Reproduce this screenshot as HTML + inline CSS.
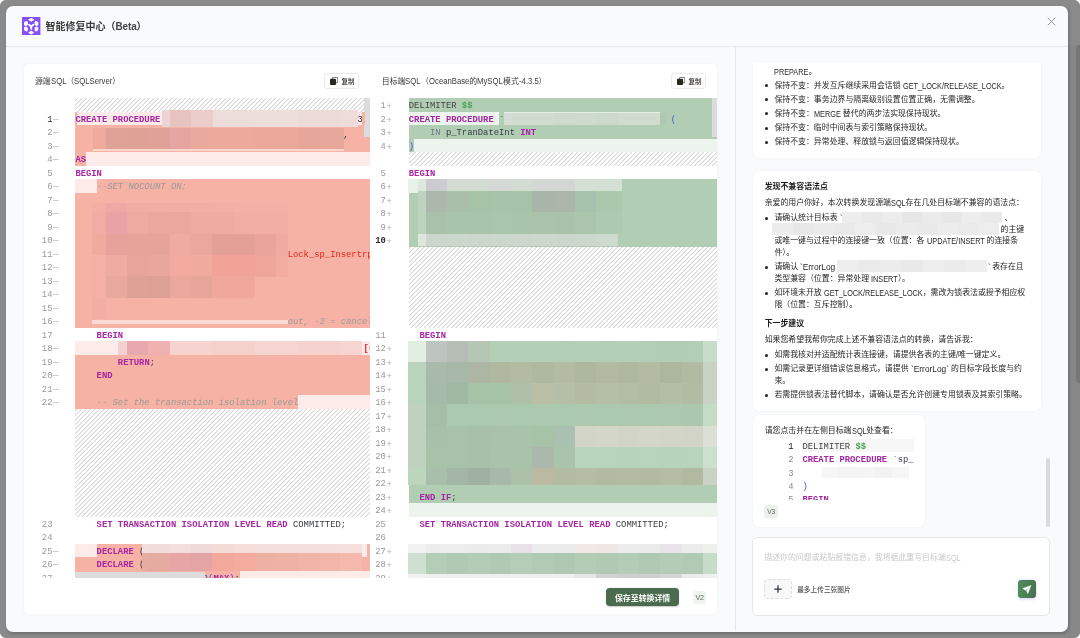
<!DOCTYPE html>
<html lang="zh-CN">
<head>
<meta charset="utf-8">
<title>智能修复中心（Beta）</title>
<style>
*{box-sizing:border-box;margin:0;padding:0}
html,body{width:1080px;height:638px;overflow:hidden}
body{background:#8a8a8a;font-family:"Liberation Sans","Noto Sans CJK SC",sans-serif;color:#222;position:relative}
.pgtrack{position:absolute;left:1068px;top:45px;width:12px;height:593px;background:#878787}
.pgthumb{position:absolute;left:1075.5px;top:45px;width:8px;height:338px;background:#767676;border-radius:4px}
.corner{position:absolute;width:6px;height:6px;z-index:9}
.modal{position:absolute;left:5.5px;top:5.5px;width:1062.3px;height:626.2px;background:#f9fafc;border-radius:7px;overflow:hidden;box-shadow:1px 1.5px 3.5px rgba(0,0,0,.2)}
.lay{position:absolute;left:-.5px;top:-.5px;width:1064px;height:627px;will-change:transform}
.in{position:absolute;left:.5px;top:.5px;width:1062.3px;height:625.5px}
.hdr{position:absolute;left:0;top:0;right:0;height:41.6px;border-bottom:1px solid #e5e8ee}
.logo{position:absolute;left:16.7px;top:11.4px;width:18.4px;height:18.4px}
.title{position:absolute;left:40px;top:12.6px;font-size:10px;line-height:18px;font-weight:700;color:#3c3c3c;white-space:nowrap}
.title b{font-weight:700;color:#444;letter-spacing:-.15px}
.close{position:absolute;left:1041.8px;top:11.9px;width:9px;height:9px}
.card{position:absolute;left:18.7px;top:58.5px;width:693.3px;height:550px;background:#fff;border-radius:5px;box-shadow:0 0 3px rgba(20,30,60,.05);overflow:hidden}
.vdiv{position:absolute;left:729.6px;top:41px;width:1px;bottom:0;background:#e5e8ee}
.lbl{position:absolute;top:10.5px;font-size:7.9px;line-height:14px;color:#3a3a3a;white-space:nowrap}
.el{font-size:8.5px;line-height:14px;vertical-align:top;transform:scaleX(.91);position:relative;top:-.3px}
.edline{position:absolute;left:0;right:0;top:33.8px;height:1px;background:#f1f1f3}
.copy{position:absolute;top:9px;width:35.3px;height:15.6px;border:1px solid #ebeae8;border-radius:3px;background:#fff;font-size:6.5px;line-height:13.6px;color:#2a2622;font-weight:500;white-space:nowrap}
.copy svg{position:absolute;left:4.6px;top:3px;width:8.2px;height:8px}
.copy span{position:absolute;left:16.2px;top:1px}
.ed{position:absolute;top:34.3px;height:479.7px;overflow:hidden;background:#fff;font-family:"Liberation Mono",monospace;font-size:8.86px;line-height:13.5px;color:#383a42}
.row{position:relative;height:13.5px;white-space:pre}
.ln{position:absolute;top:0;height:13.5px;line-height:17px;overflow:hidden;color:#9a9a9a;text-align:right;white-space:pre}
.ln b{color:#2b2b2b;font-weight:400}
.sgp,.sgm{width:9px;text-align:left;color:#b0b0b0}
.sgp{line-height:18.6px}
.sgm{transform:scaleX(1.32);transform-origin:0 50%}
.code{position:absolute;top:0;right:0;height:13.5px;line-height:17px;white-space:pre;overflow:hidden}
.hatch{background-image:repeating-linear-gradient(-45deg,rgba(40,40,40,.2) 0,rgba(40,40,40,.18) .35px,transparent 1.05px,transparent 2.48px,rgba(40,40,40,.18) 3.182px)}
.rl{background:#fcebe9}.rd{background:#f6b2a5}
.gl{background:#edf4ed}.gd{background:#b1cdb3}
.code>.rd,.code>.rl,.code>.gd,.code>.gl{display:inline-block;height:13.5px;vertical-align:top}
.k{color:#a626a4;font-weight:700}
.c{color:#9c9a98;font-style:italic}
.r{color:#e4221b}
.g{color:#4ba155;font-weight:700}
.b{color:#3b5bdb}
.t{color:#6f7f90}
.m{position:absolute}
span.m{line-height:17px;white-space:pre}
.sb{position:absolute;background:#dcdcdc}
.save{position:absolute;left:582px;top:523.9px;width:72.8px;height:18.3px;border-radius:4px;background:#4b6b4e;color:#fff;font-size:7.9px;font-weight:700;line-height:21.3px;text-align:center;white-space:nowrap;overflow:hidden;box-shadow:0 .8px 1.5px rgba(0,0,0,.22)}
.v2{position:absolute;left:668.5px;top:526.5px;width:13.6px;height:13.4px;border-radius:2.5px;background:#eef4ee;color:#666;font-size:7.2px;letter-spacing:-.35px;line-height:13.2px;text-align:center}
.chat{position:absolute;left:730.5px;top:48px;right:0;bottom:0;overflow:hidden;font-size:7.85px;line-height:14.07px;color:#262626}
.msg{position:absolute;background:#fff;border-radius:7px;box-shadow:0 0 3px rgba(20,30,60,.05)}
.p{position:absolute;white-space:nowrap;font-size:7.9px;line-height:12px;color:#262626}
.h{font-weight:700;color:#1c1c1c}
.dot{position:absolute;width:3.1px;height:3.1px;border-radius:50%;background:#222}
.e,.el,.e2{display:inline-block;transform-origin:0 50%;white-space:pre}
.e{transform:scaleX(.86)}
.e2{transform:scaleX(.98);font-size:8.5px;line-height:12px;vertical-align:top}
.e{font-size:8.5px;line-height:12px;vertical-align:top}
.chatclip{position:absolute;left:0;top:57.6px;width:1062px;height:476px;overflow:hidden;margin-top:0}
.chatclip>*{margin-top:-57.6px}
.mini{position:absolute;overflow:hidden;font-family:"Liberation Mono",monospace;font-size:8.83px;line-height:13.15px;color:#383a42}
.mrow{white-space:pre;height:13.15px;line-height:16.8px;margin-left:22.4px;position:relative;overflow:visible}
.mn{position:absolute;left:-23.8px;width:15px;text-align:right;color:#8a8a8a}
.v3{position:absolute;width:13.6px;height:12.8px;border-radius:2.5px;background:#eaf1ea;color:#666;font-size:6.7px;letter-spacing:-.3px;line-height:13px;text-align:center}
.inp{position:absolute;background:#fff;border:1px solid #e4e6e9;border-radius:5.5px}
.plus{position:absolute;background:#f8f8f8;border:1px dashed #dedede;border-radius:4px}
.send{position:absolute;width:17.9px;height:18.1px;border-radius:3.2px;background:linear-gradient(100deg,#4f8f5a,#47704e);box-shadow:0 .6px 3px rgba(110,90,255,.32)}
.send svg{position:absolute;left:0;top:0;width:18px;height:18px}
</style>
</head>
<body>
<div class="pgtrack"></div><div class="pgthumb"></div>
<div class="corner" style="left:0;top:0;background:radial-gradient(circle at 100% 100%,transparent 5.6px,#fff 6.4px)"></div><div class="corner" style="right:0;top:0;background:radial-gradient(circle at 0 100%,transparent 5.6px,#fff 6.4px)"></div><div class="corner" style="left:0;bottom:0;background:radial-gradient(circle at 100% 0,transparent 5.6px,#fff 6.4px)"></div><div class="corner" style="right:0;bottom:0;background:radial-gradient(circle at 0 0,transparent 5.6px,#fff 6.4px)"></div>
<div class="modal"><div class="lay"><div class="in">
<div class="hdr"><svg class="logo" viewBox="0 0 18 18"><rect width="18" height="18" fill="#854ff7"/><g fill="#fff" stroke="#fff" stroke-width="1" stroke-linejoin="round">
<path d="M9 1.4L11.2 2.7L9 4.1L6.8 2.7Z"/><path d="M9 13.9L11.2 15.3L9 16.6L6.8 15.3Z"/>
<path d="M2.5 5.4L4.4 4.3L5.2 5L5.2 7.3L3.7 8.3L2.5 7.6Z"/><path d="M15.5 5.4L13.6 4.3L12.8 5L12.8 7.3L14.3 8.3L15.5 7.6Z"/>
<path d="M2.5 12.6L4.4 13.7L5.2 13L5.2 10.7L3.7 9.7L2.5 10.4Z"/><path d="M15.5 12.6L13.6 13.7L12.8 13L12.8 10.7L14.3 9.7L15.5 10.4Z"/>
</g><path d="M6.9 7.6L9 9.2L11.1 7.6M9 9.2V11.6" stroke="#fff" stroke-width="1.9" stroke-linecap="round" stroke-linejoin="round" fill="none"/></svg><div class="title">智能修复中心（<b>Beta</b>）</div>
<svg class="close" viewBox="0 0 9 9"><path d="M0.8 0.8L8.2 8.2M8.2 0.8L0.8 8.2" stroke="#8a8a8a" stroke-width="0.9" fill="none"/></svg></div>
<div class="card">
<div class="edline"></div>
<div class="lbl" style="left:10.7px">源端<span class="el" style="margin-right:-1.53px">SQL</span>（<span class="el" style="margin-right:-3.78px">SQLServer</span>）</div>
<div class="copy" style="left:300px"><svg viewBox="0 0 8.2 8"><rect x="2.5" y="0.35" width="5.3" height="5.3" rx="0.9" fill="none" stroke="#2a2622" stroke-width="0.7"/><rect x="0" y="1.75" width="6.05" height="6.25" rx="0.9" fill="#2a2622"/></svg><span>复制</span></div>
<div class="lbl" style="left:357.6px">目标端<span class="el" style="margin-right:-1.53px">SQL</span>（<span class="el" style="margin-right:-4.00px">OceanBase</span>的<span class="el" style="margin-right:-2.55px">MySQL</span>模式<span class="el" style="margin-right:-1.96px">-4.3.5</span>）</div>
<div class="copy" style="left:647px"><svg viewBox="0 0 8.2 8"><rect x="2.5" y="0.35" width="5.3" height="5.3" rx="0.9" fill="none" stroke="#2a2622" stroke-width="0.7"/><rect x="0" y="1.75" width="6.05" height="6.25" rx="0.9" fill="#2a2622"/></svg><span>复制</span></div>
<div class="ed" style="left:0px;width:346px"><div class="row" style="height:13.5px"><span class="code hatch" style="left:51.2px;height:13.5px"></span></div><div class="row"><span class="ln" style="left:0;width:28.3px"><b>1</b></span><span class="ln sgm" style="left:28.3px">−</span><span class="code rl" style="left:51.2px"><span class="rd" style="width:1.9px;margin-right:-1.9px"></span><span class="k">CREATE PROCEDURE</span></span></div><div class="row"><span class="ln" style="left:0;width:28.3px">2</span><span class="ln sgm" style="left:28.3px">−</span><span class="code rd" style="left:51.2px"></span></div><div class="row"><span class="ln" style="left:0;width:28.3px">3</span><span class="ln sgm" style="left:28.3px">−</span><span class="code rd" style="left:51.2px"></span></div><div class="row"><span class="ln" style="left:0;width:28.3px">4</span><span class="ln sgm" style="left:28.3px">−</span><span class="code rl" style="left:51.2px"><span class="rd"><span class="k">AS</span></span></span></div><div class="row"><span class="ln" style="left:0;width:28.3px">5</span><span class="code " style="left:51.2px"><span class="k">BEGIN</span></span></div><div class="row"><span class="ln" style="left:0;width:28.3px">6</span><span class="ln sgm" style="left:28.3px">−</span><span class="code rd" style="left:51.2px"><span class="rl">    </span><span class="c">--SET NOCOUNT ON;</span></span></div><div class="row"><span class="ln" style="left:0;width:28.3px">7</span><span class="ln sgm" style="left:28.3px">−</span><span class="code rd" style="left:51.2px"></span></div><div class="row"><span class="ln" style="left:0;width:28.3px">8</span><span class="ln sgm" style="left:28.3px">−</span><span class="code rd" style="left:51.2px"></span></div><div class="row"><span class="ln" style="left:0;width:28.3px">9</span><span class="ln sgm" style="left:28.3px">−</span><span class="code rd" style="left:51.2px"></span></div><div class="row"><span class="ln" style="left:0;width:28.3px">10</span><span class="ln sgm" style="left:28.3px">−</span><span class="code rd" style="left:51.2px"></span></div><div class="row"><span class="ln" style="left:0;width:28.3px">11</span><span class="ln sgm" style="left:28.3px">−</span><span class="code rd" style="left:51.2px">                                        <span class="r">Lock_sp_Insertrpt</span></span></div><div class="row"><span class="ln" style="left:0;width:28.3px">12</span><span class="ln sgm" style="left:28.3px">−</span><span class="code rd" style="left:51.2px"></span></div><div class="row"><span class="ln" style="left:0;width:28.3px">13</span><span class="ln sgm" style="left:28.3px">−</span><span class="code rd" style="left:51.2px"></span></div><div class="row"><span class="ln" style="left:0;width:28.3px">14</span><span class="ln sgm" style="left:28.3px">−</span><span class="code rd" style="left:51.2px"></span></div><div class="row"><span class="ln" style="left:0;width:28.3px">15</span><span class="ln sgm" style="left:28.3px">−</span><span class="code rd" style="left:51.2px"></span></div><div class="row"><span class="ln" style="left:0;width:28.3px">16</span><span class="ln sgm" style="left:28.3px">−</span><span class="code rd" style="left:51.2px">                                        <span class="c">out, -2 = cancel</span></span></div><div class="row"><span class="ln" style="left:0;width:28.3px">17</span><span class="code " style="left:51.2px">    <span class="k">BEGIN</span></span></div><div class="row"><span class="ln" style="left:0;width:28.3px">18</span><span class="ln sgm" style="left:28.3px">−</span><span class="code rl" style="left:51.2px"></span></div><div class="row"><span class="ln" style="left:0;width:28.3px">19</span><span class="ln sgm" style="left:28.3px">−</span><span class="code rd" style="left:51.2px">        <span class="k">RETURN</span>;</span></div><div class="row"><span class="ln" style="left:0;width:28.3px">20</span><span class="ln sgm" style="left:28.3px">−</span><span class="code rd" style="left:51.2px">    <span class="k">END</span></span></div><div class="row"><span class="ln" style="left:0;width:28.3px">21</span><span class="ln sgm" style="left:28.3px">−</span><span class="code rd" style="left:51.2px"></span></div><div class="row"><span class="ln" style="left:0;width:28.3px">22</span><span class="ln sgm" style="left:28.3px">−</span><span class="code rl" style="left:51.2px"><span class="rd">    <span class="c">-- Set the transaction isolation level</span></span></span></div><div class="row" style="height:108px"><span class="code hatch" style="left:51.2px;height:108px"></span></div><div class="row"><span class="ln" style="left:0;width:28.3px">23</span><span class="code " style="left:51.2px">    <span class="k">SET TRANSACTION ISOLATION LEVEL READ</span> COMMITTED;</span></div><div class="row"><span class="ln" style="left:0;width:28.3px">24</span><span class="code " style="left:51.2px"></span></div><div class="row"><span class="ln" style="left:0;width:28.3px">25</span><span class="ln sgm" style="left:28.3px">−</span><span class="code rl" style="left:51.2px">    <span class="rd"><span class="k">DECLARE</span> (</span></span></div><div class="row"><span class="ln" style="left:0;width:28.3px">26</span><span class="ln sgm" style="left:28.3px">−</span><span class="code rd" style="left:51.2px">    <span class="k">DECLARE</span> (</span></div><div class="row"><span class="ln" style="left:0;width:28.3px">27</span><span class="ln sgm" style="left:28.3px">−</span><span class="code rl" style="left:51.2px"><span class="rd">                        <span class="b">?(</span><span class="k">MAX</span><span class="b">)</span>;</span></span></div><i class="sb" style="left:340.3px;top:0;width:5.5px;height:39px"></i><i class="sb" style="left:51px;top:474px;width:130px;height:6px"></i><i class="m" style="left:138.2px;top:11.3px;width:8.3px;height:17.8px;background:#ecd3d5"></i>
<i class="m" style="left:146.3px;top:11.3px;width:21.2px;height:17.8px;background:#e8c4c0"></i>
<i class="m" style="left:167.3px;top:11.3px;width:21.4px;height:17.8px;background:#ebcecb"></i>
<i class="m" style="left:188.5px;top:11.3px;width:42.7px;height:17.8px;background:#ecdcda"></i>
<i class="m" style="left:231px;top:11.3px;width:42.9px;height:17.8px;background:#eddddb"></i>
<i class="m" style="left:273.7px;top:11.3px;width:42.8px;height:17.8px;background:#ecdbd9"></i>
<i class="m" style="left:316.3px;top:11.3px;width:17.3px;height:17.8px;background:#eddcda"></i>
<span class="m " style="left:333.4px;top:13.5px">3</span>
<i class="m" style="left:69.3px;top:29.3px;width:12.6px;height:21.2px;background:#eeaa9d"></i>
<i class="m" style="left:81.7px;top:29.3px;width:21.5px;height:21.2px;background:#dfa296"></i>
<i class="m" style="left:103px;top:29.3px;width:21.5px;height:21.2px;background:#dea195"></i>
<i class="m" style="left:124.3px;top:29.3px;width:21.6px;height:21.2px;background:#e0a298"></i>
<i class="m" style="left:145.7px;top:29.3px;width:21.5px;height:21.2px;background:#e6a5a0"></i>
<i class="m" style="left:167px;top:29.3px;width:21.5px;height:21.2px;background:#eaa99d"></i>
<i class="m" style="left:188.3px;top:29.3px;width:42.9px;height:21.2px;background:#ecaa9d"></i>
<i class="m" style="left:231px;top:29.3px;width:42.9px;height:21.2px;background:#eaa89b"></i>
<i class="m" style="left:273.7px;top:29.3px;width:21.5px;height:21.2px;background:#e6a79a"></i>
<i class="m" style="left:295px;top:29.3px;width:25px;height:21.2px;background:#e7a89b"></i>
<i class="m" style="left:69.3px;top:50.3px;width:250.7px;height:2.8px;background:#fbd6cd"></i>
<span class="m " style="left:319px;top:29px">,</span>
<i class="m" style="left:338.1px;top:13.5px;width:2.5px;height:13.7px;background:#f6b2a5"></i>
<i class="m" style="left:67.5px;top:105px;width:14.4px;height:9.4px;background:#f4aea5"></i>
<i class="m" style="left:81.7px;top:105px;width:21.5px;height:9.4px;background:#efa8a6"></i>
<i class="m" style="left:103px;top:105px;width:21.5px;height:9.4px;background:#f2ada3"></i>
<i class="m" style="left:124.3px;top:105px;width:21.6px;height:9.4px;background:#f2ada2"></i>
<i class="m" style="left:145.7px;top:105px;width:21.5px;height:9.4px;background:#f2aea3"></i>
<i class="m" style="left:167px;top:105px;width:21.5px;height:9.4px;background:#f3aea3"></i>
<i class="m" style="left:188.3px;top:105px;width:21.6px;height:9.4px;background:#f3afa3"></i>
<i class="m" style="left:209.7px;top:105px;width:21.5px;height:9.4px;background:#f4b0a4"></i>
<i class="m" style="left:231px;top:105px;width:21.5px;height:9.4px;background:#f4b0a4"></i>
<i class="m" style="left:252.3px;top:105px;width:12px;height:9.4px;background:#f4b0a4"></i>
<i class="m" style="left:67.5px;top:114.2px;width:14.4px;height:21.6px;background:#f2aca3"></i>
<i class="m" style="left:81.7px;top:114.2px;width:21.5px;height:21.6px;background:#e9a3a4"></i>
<i class="m" style="left:103px;top:114.2px;width:21.5px;height:21.6px;background:#eeaaa1"></i>
<i class="m" style="left:124.3px;top:114.2px;width:21.6px;height:21.6px;background:#eaa79d"></i>
<i class="m" style="left:145.7px;top:114.2px;width:21.5px;height:21.6px;background:#eaa79c"></i>
<i class="m" style="left:167px;top:114.2px;width:21.5px;height:21.6px;background:#efaaa2"></i>
<i class="m" style="left:188.3px;top:114.2px;width:21.6px;height:21.6px;background:#efaba0"></i>
<i class="m" style="left:209.7px;top:114.2px;width:21.5px;height:21.6px;background:#f3aea3"></i>
<i class="m" style="left:231px;top:114.2px;width:21.5px;height:21.6px;background:#f3aea3"></i>
<i class="m" style="left:252.3px;top:114.2px;width:12px;height:21.6px;background:#f3aea3"></i>
<i class="m" style="left:67.5px;top:135.6px;width:14.4px;height:21.5px;background:#f0aaa0"></i>
<i class="m" style="left:81.7px;top:135.6px;width:21.5px;height:21.5px;background:#e6a29b"></i>
<i class="m" style="left:103px;top:135.6px;width:21.5px;height:21.5px;background:#e6a499"></i>
<i class="m" style="left:124.3px;top:135.6px;width:21.6px;height:21.5px;background:#e6a498"></i>
<i class="m" style="left:145.7px;top:135.6px;width:21.5px;height:21.5px;background:#efaba0"></i>
<i class="m" style="left:167px;top:135.6px;width:21.5px;height:21.5px;background:#eaa79c"></i>
<i class="m" style="left:188.3px;top:135.6px;width:21.6px;height:21.5px;background:#e4a097"></i>
<i class="m" style="left:209.7px;top:135.6px;width:21.5px;height:21.5px;background:#e4a096"></i>
<i class="m" style="left:231px;top:135.6px;width:21.5px;height:21.5px;background:#eaa49a"></i>
<i class="m" style="left:252.3px;top:135.6px;width:12px;height:21.5px;background:#f0aa9f"></i>
<i class="m" style="left:67.5px;top:156.9px;width:14.4px;height:21.5px;background:#f4b0a4"></i>
<i class="m" style="left:81.7px;top:156.9px;width:21.5px;height:21.5px;background:#eeab9f"></i>
<i class="m" style="left:103px;top:156.9px;width:21.5px;height:21.5px;background:#e7a59a"></i>
<i class="m" style="left:124.3px;top:156.9px;width:21.6px;height:21.5px;background:#e9a79b"></i>
<i class="m" style="left:145.7px;top:156.9px;width:21.5px;height:21.5px;background:#f3aba0"></i>
<i class="m" style="left:167px;top:156.9px;width:21.5px;height:21.5px;background:#f0aa9e"></i>
<i class="m" style="left:188.3px;top:156.9px;width:21.6px;height:21.5px;background:#f2a398"></i>
<i class="m" style="left:209.7px;top:156.9px;width:21.5px;height:21.5px;background:#f2a399"></i>
<i class="m" style="left:231px;top:156.9px;width:21.5px;height:21.5px;background:#eea69b"></i>
<i class="m" style="left:252.3px;top:156.9px;width:12px;height:21.5px;background:#f2aca0"></i>
<i class="m" style="left:67.5px;top:178.2px;width:14.4px;height:21.3px;background:#f4b0a4"></i>
<i class="m" style="left:81.7px;top:178.2px;width:21.5px;height:21.3px;background:#e8a89b"></i>
<i class="m" style="left:103px;top:178.2px;width:21.5px;height:21.3px;background:#dfa196"></i>
<i class="m" style="left:124.3px;top:178.2px;width:21.6px;height:21.3px;background:#dda095"></i>
<i class="m" style="left:145.7px;top:178.2px;width:21.5px;height:21.3px;background:#eaa79c"></i>
<i class="m" style="left:167px;top:178.2px;width:21.5px;height:21.3px;background:#e8a69a"></i>
<i class="m" style="left:188.3px;top:178.2px;width:21.6px;height:21.3px;background:#f0a89c"></i>
<i class="m" style="left:209.7px;top:178.2px;width:21.5px;height:21.3px;background:#f0a89c"></i>
<i class="m" style="left:67.5px;top:199.3px;width:14.4px;height:21.8px;background:#f3ada2"></i>
<i class="m" style="left:67.5px;top:221.7px;width:196.8px;height:3.6px;background:#f9dad5"></i>
<i class="m" style="left:93.5px;top:243px;width:9.7px;height:13.7px;background:#f2cfd0"></i>
<i class="m" style="left:103px;top:243px;width:21.5px;height:13.7px;background:#e8a9ae"></i>
<i class="m" style="left:124.3px;top:243px;width:21.6px;height:13.7px;background:#efb1b1"></i>
<i class="m" style="left:145.7px;top:243px;width:42.8px;height:13.7px;background:#f6d3ce"></i>
<i class="m" style="left:188.3px;top:243px;width:42.9px;height:13.7px;background:#f5d1cc"></i>
<i class="m" style="left:231px;top:243px;width:42.9px;height:13.7px;background:#f6d4cf"></i>
<i class="m" style="left:273.7px;top:243px;width:42.8px;height:13.7px;background:#f5d2cd"></i>
<i class="m" style="left:316.3px;top:243px;width:21.4px;height:13.7px;background:#f6d4cf"></i>
<span class="m r" style="left:339.2px;top:243px"><b>[r</b></span>
<i class="m" style="left:117.4px;top:445.5px;width:7.1px;height:9.3px;background:#f1dedb"></i>
<i class="m" style="left:124.3px;top:445.5px;width:21.6px;height:9.3px;background:#f0dcda"></i>
<i class="m" style="left:145.7px;top:445.5px;width:21.5px;height:9.3px;background:#f2dedb"></i>
<i class="m" style="left:167px;top:445.5px;width:21.5px;height:9.3px;background:#efdad9"></i>
<i class="m" style="left:188.3px;top:445.5px;width:21.6px;height:9.3px;background:#f3dcd8"></i>
<i class="m" style="left:209.7px;top:445.5px;width:21.5px;height:9.3px;background:#f5ddd9"></i>
<i class="m" style="left:231px;top:445.5px;width:21.5px;height:9.3px;background:#f4dedb"></i>
<i class="m" style="left:252.3px;top:445.5px;width:21.6px;height:9.3px;background:#f5dfdc"></i>
<i class="m" style="left:273.7px;top:445.5px;width:21.5px;height:9.3px;background:#f4dedb"></i>
<i class="m" style="left:295px;top:445.5px;width:21.5px;height:9.3px;background:#f5dfdc"></i>
<i class="m" style="left:316.3px;top:445.5px;width:21.7px;height:9.3px;background:#f6e0dd"></i>
<i class="m" style="left:117.4px;top:454.6px;width:7.1px;height:18.1px;background:#e6ada2"></i>
<i class="m" style="left:124.3px;top:454.6px;width:21.6px;height:18.1px;background:#e6aba0"></i>
<i class="m" style="left:145.7px;top:454.6px;width:21.5px;height:18.1px;background:#e8a5a6"></i>
<i class="m" style="left:167px;top:454.6px;width:21.5px;height:18.1px;background:#e4a3a4"></i>
<i class="m" style="left:188.3px;top:454.6px;width:21.6px;height:18.1px;background:#f2a89b"></i>
<i class="m" style="left:209.7px;top:454.6px;width:21.5px;height:18.1px;background:#f4ac9f"></i>
<i class="m" style="left:231px;top:454.6px;width:21.5px;height:18.1px;background:#efb0a4"></i>
<i class="m" style="left:252.3px;top:454.6px;width:21.6px;height:18.1px;background:#f0b1a5"></i>
<i class="m" style="left:273.7px;top:454.6px;width:21.5px;height:18.1px;background:#f2b4a8"></i>
<i class="m" style="left:295px;top:454.6px;width:21.5px;height:18.1px;background:#f2b5a9"></i>
<i class="m" style="left:316.3px;top:454.6px;width:21.7px;height:18.1px;background:#f4b8ad"></i>
<i class="m" style="left:342.5px;top:445.5px;width:4px;height:13.7px;background:#f6b2a5"></i></div>
<div class="ed" style="left:346px;width:347.3px"><div class="row"><span class="ln" style="left:0;width:15.6px">1</span><span class="ln sgp" style="left:16.2px">+</span><span class="code gd" style="left:38.6px"><span style="color:#454545">DELIMITER</span> <span class="g">$$</span></span></div><div class="row"><span class="ln" style="left:0;width:15.6px">2</span><span class="ln sgp" style="left:16.2px">+</span><span class="code gl" style="left:38.6px"><span class="k">CREATE PROCEDURE</span> <span class="gd">`</span></span></div><div class="row"><span class="ln" style="left:0;width:15.6px">3</span><span class="ln sgp" style="left:16.2px">+</span><span class="code gd" style="left:38.6px">    <span class="t">IN</span> p_TranDateInt <span class="k">INT</span></span></div><div class="row"><span class="ln" style="left:0;width:15.6px">4</span><span class="ln sgp" style="left:16.2px">+</span><span class="code gl" style="left:38.6px"><span class="gd"><span class="b">)</span></span></span></div><div class="row" style="height:13.5px"><span class="code hatch" style="left:38.6px;height:13.5px"></span></div><div class="row"><span class="ln" style="left:0;width:15.6px">5</span><span class="code " style="left:38.6px"><span class="k">BEGIN</span></span></div><div class="row"><span class="ln" style="left:0;width:15.6px">6</span><span class="ln sgp" style="left:16.2px">+</span><span class="code gd" style="left:38.6px"><span class="gl"></span></span></div><div class="row"><span class="ln" style="left:0;width:15.6px">7</span><span class="ln sgp" style="left:16.2px">+</span><span class="code gd" style="left:38.6px"></span></div><div class="row"><span class="ln" style="left:0;width:15.6px">8</span><span class="ln sgp" style="left:16.2px">+</span><span class="code gd" style="left:38.6px"></span></div><div class="row"><span class="ln" style="left:0;width:15.6px">9</span><span class="ln sgp" style="left:16.2px">+</span><span class="code gd" style="left:38.6px"></span></div><div class="row"><span class="ln" style="left:0;width:15.6px"><b style="font-weight:700">10</b></span><span class="ln sgp" style="left:16.2px">+</span><span class="code gd" style="left:38.6px"></span></div><div class="row" style="height:81px"><span class="code hatch" style="left:38.6px;height:81px"></span></div><div class="row"><span class="ln" style="left:0;width:15.6px">11</span><span class="code " style="left:38.6px">  <span class="k">BEGIN</span></span></div><div class="row"><span class="ln" style="left:0;width:15.6px">12</span><span class="ln sgp" style="left:16.2px">+</span><span class="code gd" style="left:38.6px"></span></div><div class="row"><span class="ln" style="left:0;width:15.6px">13</span><span class="ln sgp" style="left:16.2px">+</span><span class="code gd" style="left:38.6px"></span></div><div class="row"><span class="ln" style="left:0;width:15.6px">14</span><span class="ln sgp" style="left:16.2px">+</span><span class="code gd" style="left:38.6px"></span></div><div class="row"><span class="ln" style="left:0;width:15.6px">15</span><span class="ln sgp" style="left:16.2px">+</span><span class="code gd" style="left:38.6px"></span></div><div class="row"><span class="ln" style="left:0;width:15.6px">16</span><span class="ln sgp" style="left:16.2px">+</span><span class="code gd" style="left:38.6px"></span></div><div class="row"><span class="ln" style="left:0;width:15.6px">17</span><span class="ln sgp" style="left:16.2px">+</span><span class="code gd" style="left:38.6px"></span></div><div class="row"><span class="ln" style="left:0;width:15.6px">18</span><span class="ln sgp" style="left:16.2px">+</span><span class="code gd" style="left:38.6px"></span></div><div class="row"><span class="ln" style="left:0;width:15.6px">19</span><span class="ln sgp" style="left:16.2px">+</span><span class="code gd" style="left:38.6px"></span></div><div class="row"><span class="ln" style="left:0;width:15.6px">20</span><span class="ln sgp" style="left:16.2px">+</span><span class="code gd" style="left:38.6px"></span></div><div class="row"><span class="ln" style="left:0;width:15.6px">21</span><span class="ln sgp" style="left:16.2px">+</span><span class="code gd" style="left:38.6px"></span></div><div class="row"><span class="ln" style="left:0;width:15.6px">22</span><span class="ln sgp" style="left:16.2px">+</span><span class="code gd" style="left:38.6px"></span></div><div class="row"><span class="ln" style="left:0;width:15.6px">23</span><span class="ln sgp" style="left:16.2px">+</span><span class="code gd" style="left:38.6px">  <span class="k">END IF</span>;</span></div><div class="row"><span class="ln" style="left:0;width:15.6px">24</span><span class="ln sgp" style="left:16.2px">+</span><span class="code gl" style="left:38.6px"></span></div><div class="row"><span class="ln" style="left:0;width:15.6px">25</span><span class="code " style="left:38.6px">  <span class="k">SET TRANSACTION ISOLATION LEVEL READ</span> COMMITTED;</span></div><div class="row"><span class="ln" style="left:0;width:15.6px">26</span><span class="code " style="left:38.6px"></span></div><div class="row"><span class="ln" style="left:0;width:15.6px">27</span><span class="ln sgp" style="left:16.2px">+</span><span class="code gl" style="left:38.6px"></span></div><div class="row"><span class="ln" style="left:0;width:15.6px">28</span><span class="ln sgp" style="left:16.2px">+</span><span class="code gd" style="left:38.6px"></span></div><div class="row"><span class="ln" style="left:0;width:15.6px">29</span><span class="ln sgp" style="left:16.2px">+</span><span class="code gl" style="left:38.6px"></span></div><i class="sb" style="left:341.5px;top:0;width:5.5px;height:39px;z-index:3"></i><i class="m" style="left:133.8px;top:13.5px;width:160.2px;height:1.5px;background:#e6efe6"></i>
<i class="m" style="left:133.8px;top:14.8px;width:7.4px;height:12.4px;background:#d3ddd3"></i>
<i class="m" style="left:141px;top:14.8px;width:21.5px;height:12.4px;background:#cfdccf"></i>
<i class="m" style="left:162.3px;top:14.8px;width:21.5px;height:12.4px;background:#d1dcd1"></i>
<i class="m" style="left:183.6px;top:14.8px;width:21.6px;height:12.4px;background:#cddacd"></i>
<i class="m" style="left:205px;top:14.8px;width:21.5px;height:12.4px;background:#cfdbcf"></i>
<i class="m" style="left:226.3px;top:14.8px;width:21.5px;height:12.4px;background:#ccdacc"></i>
<i class="m" style="left:247.6px;top:14.8px;width:21.6px;height:12.4px;background:#d0dcd0"></i>
<i class="m" style="left:269px;top:14.8px;width:21px;height:12.4px;background:#cfdccf"></i>
<i class="m" style="left:289.8px;top:13.5px;width:57.7px;height:13.7px;background:#b1cdb3"></i>
<i class="m" style="left:289.8px;top:14.8px;width:5.7px;height:12.4px;background:#afc8b1"></i>
<span class="m b" style="left:300.6px;top:13.5px">(</span>
<i class="m" style="left:38.3px;top:81px;width:9.4px;height:13.7px;background:#e9f2e9"></i>
<i class="m" style="left:47.5px;top:81px;width:8.3px;height:12.1px;background:#dfe8df"></i>
<i class="m" style="left:55.6px;top:81px;width:21.6px;height:12.1px;background:#cbcbd0"></i>
<i class="m" style="left:77px;top:81px;width:21.5px;height:12.1px;background:#d3dbd3"></i>
<i class="m" style="left:98.3px;top:81px;width:21.5px;height:12.1px;background:#d2dcd2"></i>
<i class="m" style="left:119.6px;top:81px;width:21.6px;height:12.1px;background:#d5d9d5"></i>
<i class="m" style="left:141px;top:81px;width:21.5px;height:12.1px;background:#d2dcd2"></i>
<i class="m" style="left:162.3px;top:81px;width:21.5px;height:12.1px;background:#d4d8d4"></i>
<i class="m" style="left:183.6px;top:81px;width:21.6px;height:12.1px;background:#d3d6d3"></i>
<i class="m" style="left:205px;top:81px;width:21.5px;height:12.1px;background:#d3e0d3"></i>
<i class="m" style="left:226.3px;top:81px;width:21.5px;height:12.1px;background:#d4e0d4"></i>
<i class="m" style="left:247.6px;top:81px;width:4.7px;height:12.1px;background:#d4e0d4"></i>
<i class="m" style="left:47.5px;top:92.9px;width:8.3px;height:21.5px;background:#bdd3bf"></i>
<i class="m" style="left:55.6px;top:92.9px;width:21.6px;height:21.5px;background:#adb8ad"></i>
<i class="m" style="left:77px;top:92.9px;width:21.5px;height:21.5px;background:#aabfaa"></i>
<i class="m" style="left:98.3px;top:92.9px;width:21.5px;height:21.5px;background:#a6c3a8"></i>
<i class="m" style="left:119.6px;top:92.9px;width:21.6px;height:21.5px;background:#a7c3a9"></i>
<i class="m" style="left:141px;top:92.9px;width:21.5px;height:21.5px;background:#a6c2a8"></i>
<i class="m" style="left:162.3px;top:92.9px;width:21.5px;height:21.5px;background:#aab5aa"></i>
<i class="m" style="left:183.6px;top:92.9px;width:21.6px;height:21.5px;background:#abb6ab"></i>
<i class="m" style="left:205px;top:92.9px;width:21.5px;height:21.5px;background:#a6c2ad"></i>
<i class="m" style="left:226.3px;top:92.9px;width:21.5px;height:21.5px;background:#abc8ad"></i>
<i class="m" style="left:247.6px;top:92.9px;width:4.7px;height:21.5px;background:#adc9af"></i>
<i class="m" style="left:47.5px;top:114.2px;width:8.3px;height:21.6px;background:#bdd3bf"></i>
<i class="m" style="left:55.6px;top:114.2px;width:21.6px;height:21.6px;background:#a9c0aa"></i>
<i class="m" style="left:77px;top:114.2px;width:21.5px;height:21.6px;background:#a8c4aa"></i>
<i class="m" style="left:98.3px;top:114.2px;width:21.5px;height:21.6px;background:#a8c4aa"></i>
<i class="m" style="left:119.6px;top:114.2px;width:21.6px;height:21.6px;background:#a9c5ab"></i>
<i class="m" style="left:141px;top:114.2px;width:21.5px;height:21.6px;background:#a8c4aa"></i>
<i class="m" style="left:162.3px;top:114.2px;width:21.5px;height:21.6px;background:#a9c4ab"></i>
<i class="m" style="left:183.6px;top:114.2px;width:21.6px;height:21.6px;background:#a9c3ab"></i>
<i class="m" style="left:205px;top:114.2px;width:21.5px;height:21.6px;background:#aac5ac"></i>
<i class="m" style="left:226.3px;top:114.2px;width:21.5px;height:21.6px;background:#adc9af"></i>
<i class="m" style="left:247.6px;top:114.2px;width:4.7px;height:21.6px;background:#aecab0"></i>
<i class="m" style="left:47.5px;top:135.6px;width:8.3px;height:12.6px;background:#dce6dc"></i>
<i class="m" style="left:55.6px;top:135.6px;width:21.6px;height:12.6px;background:#cdd6cd"></i>
<i class="m" style="left:77px;top:135.6px;width:21.5px;height:12.6px;background:#ccd8cc"></i>
<i class="m" style="left:98.3px;top:135.6px;width:21.5px;height:12.6px;background:#cdd6cd"></i>
<i class="m" style="left:119.6px;top:135.6px;width:21.6px;height:12.6px;background:#ccd8cc"></i>
<i class="m" style="left:141px;top:135.6px;width:21.5px;height:12.6px;background:#cdd6cd"></i>
<i class="m" style="left:162.3px;top:135.6px;width:21.5px;height:12.6px;background:#ccd8cc"></i>
<i class="m" style="left:183.6px;top:135.6px;width:21.6px;height:12.6px;background:#cdd6cd"></i>
<i class="m" style="left:205px;top:135.6px;width:21.5px;height:12.6px;background:#ccd8cc"></i>
<i class="m" style="left:226.3px;top:135.6px;width:21.5px;height:12.6px;background:#cfdacf"></i>
<i class="m" style="left:247.6px;top:135.6px;width:4.7px;height:12.6px;background:#b1cdb3"></i>
<i class="m" style="left:38.3px;top:243px;width:17.5px;height:20.8px;background:#e3eee3"></i>
<i class="m" style="left:55.6px;top:243px;width:21.6px;height:20.8px;background:#bec5be"></i>
<i class="m" style="left:77px;top:243px;width:21.5px;height:20.8px;background:#b5bdb5"></i>
<i class="m" style="left:98.3px;top:243px;width:21.5px;height:20.8px;background:#b5c6b5"></i>
<i class="m" style="left:119.6px;top:243px;width:21.6px;height:20.8px;background:#b3cfb5"></i>
<i class="m" style="left:141px;top:243px;width:21.5px;height:20.8px;background:#b3cfb5"></i>
<i class="m" style="left:162.3px;top:243px;width:21.5px;height:20.8px;background:#b3cfb5"></i>
<i class="m" style="left:183.6px;top:243px;width:21.6px;height:20.8px;background:#b2ceb4"></i>
<i class="m" style="left:205px;top:243px;width:21.5px;height:20.8px;background:#b3cfb5"></i>
<i class="m" style="left:226.3px;top:243px;width:21.5px;height:20.8px;background:#b2ceb4"></i>
<i class="m" style="left:247.6px;top:243px;width:21.6px;height:20.8px;background:#b3cfb5"></i>
<i class="m" style="left:269px;top:243px;width:21.5px;height:20.8px;background:#b2ceb4"></i>
<i class="m" style="left:290.3px;top:243px;width:21.5px;height:20.8px;background:#b1cdb3"></i>
<i class="m" style="left:311.6px;top:243px;width:21.6px;height:20.8px;background:#b2ceb4"></i>
<i class="m" style="left:333px;top:243px;width:14.5px;height:20.8px;background:#c9dcc9"></i>
<i class="m" style="left:38.3px;top:263.6px;width:17.5px;height:21.5px;background:#bad3bc"></i>
<i class="m" style="left:55.6px;top:263.6px;width:21.6px;height:21.5px;background:#a9b9ab"></i>
<i class="m" style="left:77px;top:263.6px;width:21.5px;height:21.5px;background:#a7b8a9"></i>
<i class="m" style="left:98.3px;top:263.6px;width:21.5px;height:21.5px;background:#adb6a5"></i>
<i class="m" style="left:119.6px;top:263.6px;width:21.6px;height:21.5px;background:#b0b9a0"></i>
<i class="m" style="left:141px;top:263.6px;width:21.5px;height:21.5px;background:#b3bba3"></i>
<i class="m" style="left:162.3px;top:263.6px;width:21.5px;height:21.5px;background:#afb8a0"></i>
<i class="m" style="left:183.6px;top:263.6px;width:21.6px;height:21.5px;background:#b3bba3"></i>
<i class="m" style="left:205px;top:263.6px;width:21.5px;height:21.5px;background:#aeb7a0"></i>
<i class="m" style="left:226.3px;top:263.6px;width:21.5px;height:21.5px;background:#b2baa3"></i>
<i class="m" style="left:247.6px;top:263.6px;width:21.6px;height:21.5px;background:#afb8a1"></i>
<i class="m" style="left:269px;top:263.6px;width:21.5px;height:21.5px;background:#b3bba3"></i>
<i class="m" style="left:290.3px;top:263.6px;width:21.5px;height:21.5px;background:#adb69f"></i>
<i class="m" style="left:311.6px;top:263.6px;width:21.6px;height:21.5px;background:#b1baa2"></i>
<i class="m" style="left:333px;top:263.6px;width:14.5px;height:21.5px;background:#c9d2c4"></i>
<i class="m" style="left:38.3px;top:284.9px;width:17.5px;height:21.5px;background:#bad3bc"></i>
<i class="m" style="left:55.6px;top:284.9px;width:21.6px;height:21.5px;background:#a5baa8"></i>
<i class="m" style="left:77px;top:284.9px;width:21.5px;height:21.5px;background:#9fb8a2"></i>
<i class="m" style="left:98.3px;top:284.9px;width:21.5px;height:21.5px;background:#a6c3a8"></i>
<i class="m" style="left:119.6px;top:284.9px;width:21.6px;height:21.5px;background:#a6c3a8"></i>
<i class="m" style="left:141px;top:284.9px;width:21.5px;height:21.5px;background:#b0c0a8"></i>
<i class="m" style="left:162.3px;top:284.9px;width:21.5px;height:21.5px;background:#b8bfa5"></i>
<i class="m" style="left:183.6px;top:284.9px;width:21.6px;height:21.5px;background:#b5bea6"></i>
<i class="m" style="left:205px;top:284.9px;width:21.5px;height:21.5px;background:#b3bca3"></i>
<i class="m" style="left:226.3px;top:284.9px;width:21.5px;height:21.5px;background:#b5bea6"></i>
<i class="m" style="left:247.6px;top:284.9px;width:21.6px;height:21.5px;background:#b3bca4"></i>
<i class="m" style="left:269px;top:284.9px;width:21.5px;height:21.5px;background:#b1bba2"></i>
<i class="m" style="left:290.3px;top:284.9px;width:21.5px;height:21.5px;background:#b4bda5"></i>
<i class="m" style="left:311.6px;top:284.9px;width:21.6px;height:21.5px;background:#b2bba3"></i>
<i class="m" style="left:333px;top:284.9px;width:14.5px;height:21.5px;background:#c9d2c4"></i>
<i class="m" style="left:38.3px;top:306.2px;width:17.5px;height:21.6px;background:#bfd2c0"></i>
<i class="m" style="left:55.6px;top:306.2px;width:21.6px;height:21.6px;background:#a6bda8"></i>
<i class="m" style="left:77px;top:306.2px;width:21.5px;height:21.6px;background:#abc9ae"></i>
<i class="m" style="left:98.3px;top:306.2px;width:21.5px;height:21.6px;background:#abc9ae"></i>
<i class="m" style="left:119.6px;top:306.2px;width:21.6px;height:21.6px;background:#acc9af"></i>
<i class="m" style="left:141px;top:306.2px;width:21.5px;height:21.6px;background:#abc9ae"></i>
<i class="m" style="left:162.3px;top:306.2px;width:21.5px;height:21.6px;background:#acc9af"></i>
<i class="m" style="left:183.6px;top:306.2px;width:21.6px;height:21.6px;background:#abc9ae"></i>
<i class="m" style="left:205px;top:306.2px;width:21.5px;height:21.6px;background:#acc9af"></i>
<i class="m" style="left:226.3px;top:306.2px;width:21.5px;height:21.6px;background:#abc9ae"></i>
<i class="m" style="left:247.6px;top:306.2px;width:21.6px;height:21.6px;background:#acc9af"></i>
<i class="m" style="left:269px;top:306.2px;width:21.5px;height:21.6px;background:#abc9ae"></i>
<i class="m" style="left:290.3px;top:306.2px;width:21.5px;height:21.6px;background:#acc9af"></i>
<i class="m" style="left:311.6px;top:306.2px;width:21.6px;height:21.6px;background:#abc8ae"></i>
<i class="m" style="left:333px;top:306.2px;width:14.5px;height:21.6px;background:#c4dcc6"></i>
<i class="m" style="left:38.3px;top:327.6px;width:17.5px;height:21.5px;background:#bfd2c0"></i>
<i class="m" style="left:55.6px;top:327.6px;width:21.6px;height:21.5px;background:#a8c0aa"></i>
<i class="m" style="left:77px;top:327.6px;width:21.5px;height:21.5px;background:#a8c2aa"></i>
<i class="m" style="left:98.3px;top:327.6px;width:21.5px;height:21.5px;background:#a7c1a9"></i>
<i class="m" style="left:119.6px;top:327.6px;width:21.6px;height:21.5px;background:#a8c2aa"></i>
<i class="m" style="left:141px;top:327.6px;width:21.5px;height:21.5px;background:#a8c3aa"></i>
<i class="m" style="left:162.3px;top:327.6px;width:21.5px;height:21.5px;background:#a6c3a8"></i>
<i class="m" style="left:183.6px;top:327.6px;width:21.6px;height:21.5px;background:#aac0b0"></i>
<i class="m" style="left:205px;top:327.6px;width:21.5px;height:21.5px;background:#d2d5c8"></i>
<i class="m" style="left:226.3px;top:327.6px;width:21.5px;height:21.5px;background:#d3d6c9"></i>
<i class="m" style="left:247.6px;top:327.6px;width:21.6px;height:21.5px;background:#d1d4c7"></i>
<i class="m" style="left:269px;top:327.6px;width:21.5px;height:21.5px;background:#d3d6c9"></i>
<i class="m" style="left:290.3px;top:327.6px;width:21.5px;height:21.5px;background:#d2d5c8"></i>
<i class="m" style="left:311.6px;top:327.6px;width:21.6px;height:21.5px;background:#d1d4c7"></i>
<i class="m" style="left:333px;top:327.6px;width:14.5px;height:21.5px;background:#dcdfd5"></i>
<i class="m" style="left:38.3px;top:348.9px;width:17.5px;height:21.5px;background:#bfd2c0"></i>
<i class="m" style="left:55.6px;top:348.9px;width:21.6px;height:21.5px;background:#a8c2aa"></i>
<i class="m" style="left:77px;top:348.9px;width:21.5px;height:21.5px;background:#a8c2aa"></i>
<i class="m" style="left:98.3px;top:348.9px;width:21.5px;height:21.5px;background:#a7c1a9"></i>
<i class="m" style="left:119.6px;top:348.9px;width:21.6px;height:21.5px;background:#a9c3ab"></i>
<i class="m" style="left:141px;top:348.9px;width:21.5px;height:21.5px;background:#a8c2aa"></i>
<i class="m" style="left:162.3px;top:348.9px;width:21.5px;height:21.5px;background:#adb8ad"></i>
<i class="m" style="left:183.6px;top:348.9px;width:21.6px;height:21.5px;background:#aac4ac"></i>
<i class="m" style="left:205px;top:348.9px;width:21.5px;height:21.5px;background:#b9d4bc"></i>
<i class="m" style="left:226.3px;top:348.9px;width:21.5px;height:21.5px;background:#b9d4bc"></i>
<i class="m" style="left:247.6px;top:348.9px;width:21.6px;height:21.5px;background:#b8d3bb"></i>
<i class="m" style="left:269px;top:348.9px;width:21.5px;height:21.5px;background:#b9d4bc"></i>
<i class="m" style="left:290.3px;top:348.9px;width:21.5px;height:21.5px;background:#b8d3bb"></i>
<i class="m" style="left:311.6px;top:348.9px;width:21.6px;height:21.5px;background:#b9d4bc"></i>
<i class="m" style="left:333px;top:348.9px;width:14.5px;height:21.5px;background:#cde0ce"></i>
<i class="m" style="left:38.3px;top:370.2px;width:17.5px;height:17px;background:#bcd6be"></i>
<i class="m" style="left:55.6px;top:370.2px;width:21.6px;height:17px;background:#a8bfab"></i>
<i class="m" style="left:77px;top:370.2px;width:21.5px;height:17px;background:#a3b5a6"></i>
<i class="m" style="left:98.3px;top:370.2px;width:21.5px;height:17px;background:#a0b0a3"></i>
<i class="m" style="left:119.6px;top:370.2px;width:21.6px;height:17px;background:#a8b8aa"></i>
<i class="m" style="left:141px;top:370.2px;width:21.5px;height:17px;background:#acc0a8"></i>
<i class="m" style="left:162.3px;top:370.2px;width:21.5px;height:17px;background:#bcb9a3"></i>
<i class="m" style="left:183.6px;top:370.2px;width:21.6px;height:17px;background:#b3bba3"></i>
<i class="m" style="left:205px;top:370.2px;width:21.5px;height:17px;background:#b4bca4"></i>
<i class="m" style="left:226.3px;top:370.2px;width:21.5px;height:17px;background:#b2baa2"></i>
<i class="m" style="left:247.6px;top:370.2px;width:21.6px;height:17px;background:#b3bba3"></i>
<i class="m" style="left:269px;top:370.2px;width:21.5px;height:17px;background:#b2baa2"></i>
<i class="m" style="left:290.3px;top:370.2px;width:21.5px;height:17px;background:#b4bca4"></i>
<i class="m" style="left:311.6px;top:370.2px;width:21.6px;height:17px;background:#b1b9a1"></i>
<i class="m" style="left:333px;top:370.2px;width:14.5px;height:17px;background:#c9d2c4"></i>
<i class="m" style="left:38.3px;top:445.9px;width:17.5px;height:8.9px;background:#f2f2f2"></i>
<i class="m" style="left:55.6px;top:445.9px;width:21.6px;height:8.9px;background:#ececec"></i>
<i class="m" style="left:77px;top:445.9px;width:21.5px;height:8.9px;background:#ededed"></i>
<i class="m" style="left:98.3px;top:445.9px;width:21.5px;height:8.9px;background:#ebebeb"></i>
<i class="m" style="left:119.6px;top:445.9px;width:21.6px;height:8.9px;background:#ececec"></i>
<i class="m" style="left:141px;top:445.9px;width:21.5px;height:8.9px;background:#e8e2e8"></i>
<i class="m" style="left:162.3px;top:445.9px;width:21.5px;height:8.9px;background:#ececec"></i>
<i class="m" style="left:183.6px;top:445.9px;width:21.6px;height:8.9px;background:#ebebeb"></i>
<i class="m" style="left:205px;top:445.9px;width:21.5px;height:8.9px;background:#efe8e4"></i>
<i class="m" style="left:226.3px;top:445.9px;width:21.5px;height:8.9px;background:#eee7e3"></i>
<i class="m" style="left:247.6px;top:445.9px;width:21.6px;height:8.9px;background:#ececec"></i>
<i class="m" style="left:269px;top:445.9px;width:21.5px;height:8.9px;background:#ebebeb"></i>
<i class="m" style="left:290.3px;top:445.9px;width:21.5px;height:8.9px;background:#e8e4ea"></i>
<i class="m" style="left:311.6px;top:445.9px;width:21.6px;height:8.9px;background:#ececec"></i>
<i class="m" style="left:333px;top:445.9px;width:14.5px;height:8.9px;background:#eef0ee"></i>
<i class="m" style="left:38.3px;top:454.6px;width:17.5px;height:21.6px;background:#cfe0d0"></i>
<i class="m" style="left:55.6px;top:454.6px;width:21.6px;height:21.6px;background:#b4cdb6"></i>
<i class="m" style="left:77px;top:454.6px;width:21.5px;height:21.6px;background:#b0c9b2"></i>
<i class="m" style="left:98.3px;top:454.6px;width:21.5px;height:21.6px;background:#b3ccb5"></i>
<i class="m" style="left:119.6px;top:454.6px;width:21.6px;height:21.6px;background:#b0c9b2"></i>
<i class="m" style="left:141px;top:454.6px;width:21.5px;height:21.6px;background:#b4cdb6"></i>
<i class="m" style="left:162.3px;top:454.6px;width:21.5px;height:21.6px;background:#b1cab3"></i>
<i class="m" style="left:183.6px;top:454.6px;width:21.6px;height:21.6px;background:#afc8b1"></i>
<i class="m" style="left:205px;top:454.6px;width:21.5px;height:21.6px;background:#b3ccb5"></i>
<i class="m" style="left:226.3px;top:454.6px;width:21.5px;height:21.6px;background:#b0c9b2"></i>
<i class="m" style="left:247.6px;top:454.6px;width:21.6px;height:21.6px;background:#b3ccb5"></i>
<i class="m" style="left:269px;top:454.6px;width:21.5px;height:21.6px;background:#b0c9b2"></i>
<i class="m" style="left:290.3px;top:454.6px;width:21.5px;height:21.6px;background:#b3ccb5"></i>
<i class="m" style="left:311.6px;top:454.6px;width:21.6px;height:21.6px;background:#b1cab3"></i>
<i class="m" style="left:333px;top:454.6px;width:14.5px;height:21.6px;background:#c6dbc8"></i>
<i class="m" style="left:38.3px;top:476px;width:17.5px;height:4.1px;background:#f0f2f0"></i>
<i class="m" style="left:55.6px;top:476px;width:21.6px;height:4.1px;background:#efefef"></i>
<i class="m" style="left:77px;top:476px;width:21.5px;height:4.1px;background:#efefef"></i>
<i class="m" style="left:98.3px;top:476px;width:21.5px;height:4.1px;background:#efefef"></i>
<i class="m" style="left:119.6px;top:476px;width:21.6px;height:4.1px;background:#efefef"></i>
<i class="m" style="left:141px;top:476px;width:21.5px;height:4.1px;background:#efefef"></i>
<i class="m" style="left:162.3px;top:476px;width:21.5px;height:4.1px;background:#efefef"></i>
<i class="m" style="left:183.6px;top:476px;width:21.6px;height:4.1px;background:#efefef"></i>
<i class="m" style="left:205px;top:476px;width:21.5px;height:4.1px;background:#e6e6e6"></i>
<i class="m" style="left:226.3px;top:476px;width:21.5px;height:4.1px;background:#d2d2d2"></i>
<i class="m" style="left:247.6px;top:476px;width:21.6px;height:4.1px;background:#cfcfcf"></i>
<i class="m" style="left:269px;top:476px;width:21.5px;height:4.1px;background:#cfcfcf"></i>
<i class="m" style="left:290.3px;top:476px;width:21.5px;height:4.1px;background:#d4d4d4"></i>
<i class="m" style="left:311.6px;top:476px;width:21.6px;height:4.1px;background:#ebebeb"></i>
<i class="m" style="left:333px;top:476px;width:14.5px;height:4.1px;background:#f0f0f0"></i></div>
<div class="save">保存至转换详情</div><div class="v2">V2</div>
</div>
<div class="vdiv"></div>
<div class="chatclip">
<div class="msg" style="left:747.4px;top:44.5px;width:288.1px;height:107.6px;"></div>
<div class="p" style="left:768.9px;top:60px;"><span class="e" style="margin-right:-5.60px">PREPARE</span>。</div>
<i class="dot" style="left:759.8px;top:78.7px"></i>
<div class="p" style="left:768.9px;top:74.1px;">保持不变：并发互斥继续采用会话锁 <span class="e" style="margin-right:-16.07px">GET_LOCK/RELEASE_LOCK</span>。</div>
<i class="dot" style="left:759.8px;top:92.8px"></i>
<div class="p" style="left:768.9px;top:88.2px;">保持不变：事务边界与隔离级别设置位置正确，无需调整。</div>
<i class="dot" style="left:759.8px;top:106.9px"></i>
<div class="p" style="left:768.9px;top:102.3px;">保持不变：<span class="e" style="margin-right:-4.36px">MERGE</span> 替代的两步法实现保持现状。</div>
<i class="dot" style="left:759.8px;top:121px"></i>
<div class="p" style="left:768.9px;top:116.4px;">保持不变：临时中间表与索引策略保持现状。</div>
<i class="dot" style="left:759.8px;top:135px"></i>
<div class="p" style="left:768.9px;top:130.4px;">保持不变：异常处理、释放锁与返回值逻辑保持现状。</div>
<div class="msg" style="left:747.4px;top:165px;width:288.1px;height:240.3px;"></div>
<div class="p h" style="left:759.2px;top:175.2px;">发现不兼容语法点</div>
<div class="p" style="left:759.2px;top:191.3px;">亲爱的用户你好，本次转换发现源端<span class="e" style="margin-right:-2.38px">SQL</span>存在几处目标端不兼容的语法点：</div>
<i class="dot" style="left:759.8px;top:211.5px"></i>
<div class="p" style="left:768.9px;top:206.9px;">请确认统计目标表 <span class="e" style="margin-right:-0.40px">`</span></div>
<div class="p" style="left:999px;top:206.9px;">、</div>
<div class="p" style="left:995px;top:218.3px;">的主键</div>
<div class="p" style="left:768.9px;top:229.7px;">或唯一键与过程中的连接键一致（位置：各 <span class="e" style="margin-right:-9.41px">UPDATE/INSERT</span> 的连接条</div>
<div class="p" style="left:768.9px;top:241.1px;">件）。</div>
<i class="dot" style="left:759.8px;top:260.1px"></i>
<div class="p" style="left:768.9px;top:255.5px;">请确认 <span class="e2" style="margin-right:-0.72px">`ErrorLog</span></div>
<div class="p" style="left:982px;top:255.5px;"><span class="e" style="margin-right:-0.40px">`</span> 表存在且</div>
<div class="p" style="left:768.9px;top:267.1px;">类型兼容（位置：异常处理 <span class="e" style="margin-right:-4.34px">INSERT</span>）。</div>
<i class="dot" style="left:759.8px;top:286.2px"></i>
<div class="p" style="left:768.9px;top:281.6px;">如环境未开放 <span class="e" style="margin-right:-16.07px">GET_LOCK/RELEASE_LOCK</span>，需改为锁表法或授予相应权</div>
<div class="p" style="left:768.9px;top:293.2px;">限（位置：互斥控制）。</div>
<div class="p h" style="left:759.2px;top:312.5px;">下一步建议</div>
<div class="p" style="left:759.2px;top:328.5px;">如果您希望我帮你完成上述不兼容语法点的转换，请告诉我：</div>
<i class="dot" style="left:759.8px;top:348px"></i>
<div class="p" style="left:768.9px;top:343.4px;">如需我核对并适配统计表连接键，请提供各表的主键<span class="e" style="margin-right:-0.33px">/</span>唯一键定义。</div>
<i class="dot" style="left:759.8px;top:362.5px"></i>
<div class="p" style="left:768.9px;top:357.9px;">如需记录更详细错误信息格式，请提供 <span class="e2" style="margin-right:-0.77px">`ErrorLog`</span> 的目标字段长度与约</div>
<div class="p" style="left:768.9px;top:369.2px;">束。</div>
<i class="dot" style="left:759.8px;top:388.4px"></i>
<div class="p" style="left:768.9px;top:383.8px;">若需提供锁表法替代脚本，请确认是否允许创建专用锁表及其索引策略。</div>
<i class="m" style="left:836.3px;top:206.7px;width:20.35px;height:11.2px;background:#ededed"></i>
<i class="m" style="left:856.35px;top:206.7px;width:20.35px;height:11.2px;background:#e9e9e9"></i>
<i class="m" style="left:876.4px;top:206.7px;width:20.35px;height:11.2px;background:#ececec"></i>
<i class="m" style="left:896.45px;top:206.7px;width:20.35px;height:11.2px;background:#e7e7e7"></i>
<i class="m" style="left:916.5px;top:206.7px;width:20.35px;height:11.2px;background:#ebebeb"></i>
<i class="m" style="left:936.55px;top:206.7px;width:20.35px;height:11.2px;background:#e8e8e8"></i>
<i class="m" style="left:956.6px;top:206.7px;width:20.35px;height:11.2px;background:#ededed"></i>
<i class="m" style="left:976.65px;top:206.7px;width:20.35px;height:11.2px;background:#eaeaea"></i>
<i class="m" style="left:766.5px;top:217.9px;width:20.94px;height:11.2px;background:#ececec"></i>
<i class="m" style="left:787.14px;top:217.9px;width:20.94px;height:11.2px;background:#e8e8e8"></i>
<i class="m" style="left:807.77px;top:217.9px;width:20.94px;height:11.2px;background:#ebebeb"></i>
<i class="m" style="left:828.41px;top:217.9px;width:20.94px;height:11.2px;background:#e9e9e9"></i>
<i class="m" style="left:849.05px;top:217.9px;width:20.94px;height:11.2px;background:#ededed"></i>
<i class="m" style="left:869.68px;top:217.9px;width:20.94px;height:11.2px;background:#e8e8e8"></i>
<i class="m" style="left:890.32px;top:217.9px;width:20.94px;height:11.2px;background:#ebebeb"></i>
<i class="m" style="left:910.95px;top:217.9px;width:20.94px;height:11.2px;background:#e9e9e9"></i>
<i class="m" style="left:931.59px;top:217.9px;width:20.94px;height:11.2px;background:#ececec"></i>
<i class="m" style="left:952.23px;top:217.9px;width:20.94px;height:11.2px;background:#eaeaea"></i>
<i class="m" style="left:972.86px;top:217.9px;width:20.94px;height:11.2px;background:#ededed"></i>
<i class="m" style="left:831.5px;top:254.9px;width:21.73px;height:11.6px;background:#ededed"></i>
<i class="m" style="left:852.93px;top:254.9px;width:21.73px;height:11.6px;background:#eaeaea"></i>
<i class="m" style="left:874.36px;top:254.9px;width:21.73px;height:11.6px;background:#ececec"></i>
<i class="m" style="left:895.79px;top:254.9px;width:21.73px;height:11.6px;background:#e9e9e9"></i>
<i class="m" style="left:917.21px;top:254.9px;width:21.73px;height:11.6px;background:#ededed"></i>
<i class="m" style="left:938.64px;top:254.9px;width:21.73px;height:11.6px;background:#ebebeb"></i>
<i class="m" style="left:960.07px;top:254.9px;width:21.73px;height:11.6px;background:#eeeeee"></i>
<div class="msg" style="left:747.4px;top:409.2px;width:172.2px;height:112.2px;"></div>
<div class="p" style="left:759.2px;top:419.5px;">请您点击并在左侧目标端<span class="e" style="margin-right:-2.38px">SQL</span>处查看：</div>
<div class="mini" style="left:774.5px;top:433.8px;width:134px;height:61.1px">
<div class="mrow" style="background:#f6f6f6"><span class="mn" style="color:#222">1</span><span style="color:#454545">DELIMITER</span> <span class="g">$$</span></div>
<div class="mrow"><span class="mn">2</span><span class="k">CREATE PROCEDURE</span> `sp_</div>
<div class="mrow"><span class="mn">3</span></div>
<div class="mrow"><span class="mn">4</span><span class="b">)</span></div>
<div class="mrow"><span class="mn">5</span><span class="k">BEGIN</span></div>
</div>
<i class="m" style="left:816.2px;top:461.4px;width:17.8px;height:11.5px;background:#f6f6f6"></i>
<i class="m" style="left:833.7px;top:461.4px;width:17.8px;height:11.5px;background:#f3f3f3"></i>
<i class="m" style="left:851.2px;top:461.4px;width:17.8px;height:11.5px;background:#f5f5f5"></i>
<i class="m" style="left:868.7px;top:461.4px;width:17.8px;height:11.5px;background:#f2f2f2"></i>
<i class="m" style="left:886.2px;top:461.4px;width:17.8px;height:11.5px;background:#f6f6f6"></i>
<div class="v3" style="left:758.8px;top:499.7px">V3</div>
</div>
<div class="sb" style="left:1040.5px;top:452.3px;width:4px;height:69.2px;border-radius:2px;background:#dadada"></div>
<div class="inp" style="left:746.9px;top:531px;width:297.8px;height:79px;"></div>
<div class="p" style="left:758.8px;top:546.8px;color:#c9c9c9">描述你的问题或粘贴报错信息，我将据此重写目标端<span class="e" style="margin-right:-2.38px">SQL</span></div>
<div class="plus" style="left:758.8px;top:573.6px;width:27.7px;height:19.8px;"></div>
<svg class="m" style="left:768.6px;top:579.5px;width:8px;height:8px" viewBox="0 0 8 8"><path d="M4 0.3V7.7M0.3 4H7.7" stroke="#2d3540" stroke-width="1.25"/></svg>
<div class="p" style="left:791.7px;top:578.6px;font-size:6.7px;font-weight:500;color:#505050">最多上传三张图片</div>
<div class="send" style="left:1012.6px;top:574.1px"><svg viewBox="0 0 18 18"><path d="M12.9 5.6L4.8 8.5L7.5 10.2L10.7 7.8L8.5 10.9L9.9 13.4Z" fill="#fff" stroke="#fff" stroke-width="0.5" stroke-linejoin="round"/></svg></div>
</div></div></div>
</body>
</html>
